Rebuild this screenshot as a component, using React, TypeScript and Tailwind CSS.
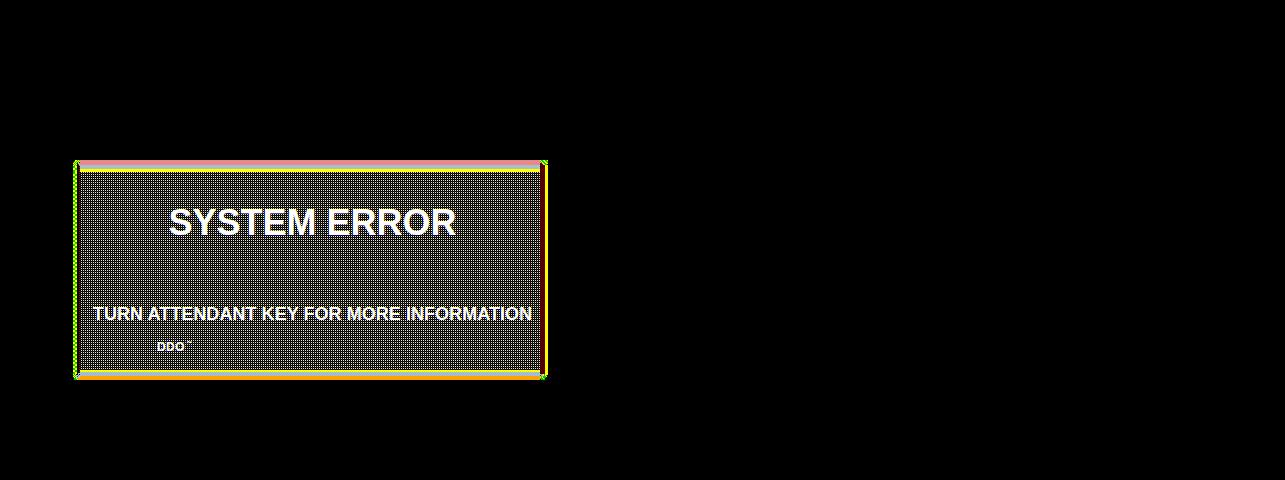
const dither =
  "bg-[conic-gradient(#ffff00_25%,#000_0_50%,#0000e0_0_75%,#000_0)] bg-[size:2px_2px]";

type Cell = [number, number, string];

const G = "#00d000";
const Y = "#ffff00";
const R = "#c00000";
const S = "#a8c8d0";
const D = "#500000";

function Corner({ w, h, cells }: { w: number; h: number; cells: Cell[] }) {
  return (
    <svg
      width={w}
      height={h}
      viewBox={`0 0 ${w} ${h}`}
      shapeRendering="crispEdges"
      className="block"
      aria-hidden
    >
      {cells.map(([x, y, c], i) => (
        <rect key={i} x={x} y={y} width="1" height="1" fill={c} />
      ))}
    </svg>
  );
}

// left rail carried on through the corner rows
function leftRail(from: number, to: number): Cell[] {
  const out: Cell[] = [];
  for (let y = from; y < to; y++) {
    for (let x = 0; x < 4; x++) out.push([x, y, (x >> 1) + (y >> 1) & 1 ? G : Y]);
    if (y % 2) out.push([6, y, R]);
  }
  return out;
}

function rightRail(from: number, to: number): Cell[] {
  const out: Cell[] = [];
  for (let y = from; y < to; y++) {
    for (let x = 0; x < 5; x++) out.push([x, y, D]);
    for (let x = 5; x < 8; x++) out.push([x, y, Y]);
  }
  return out;
}

const topLeft: Cell[] = [
  [2, 0, Y], [3, 0, Y], [4, 0, G], [5, 0, Y], [6, 0, G],
  [1, 1, G], [2, 1, Y], [3, 1, G], [4, 1, Y], [5, 1, G], [6, 1, Y],
  [0, 2, R], [1, 2, Y], [2, 2, G], [3, 2, Y], [4, 2, R], [5, 2, Y],
  [0, 3, Y], [1, 3, G], [2, 3, Y], [3, 3, G], [5, 3, S], [6, 3, S],
  [0, 4, G], [1, 4, Y], [2, 4, G], [3, 4, Y], [5, 4, R], [6, 4, S],
  [0, 5, Y], [1, 5, G], [2, 5, Y], [3, 5, G], [6, 5, "#dd8888"],
  ...leftRail(6, 12),
];

const topRight: Cell[] = [
  [0, 0, Y], [1, 0, G], [2, 0, G], [3, 0, Y], [4, 0, Y], [5, 0, G], [6, 0, G], [7, 0, Y],
  [0, 1, G], [1, 1, Y], [2, 1, G], [3, 1, G], [4, 1, Y], [5, 1, Y], [6, 1, G], [7, 1, G],
  [0, 2, S], [1, 2, G], [2, 2, Y], [3, 2, G], [4, 2, G], [5, 2, Y], [6, 2, Y], [7, 2, G],
  [0, 3, D], [1, 3, D], [2, 3, S], [3, 3, Y], [4, 3, G], [5, 3, G], [6, 3, Y], [7, 3, Y],
  [0, 4, D], [1, 4, D], [2, 4, R], [3, 4, S], [4, 4, Y], [5, 4, G], [6, 4, G],
  ...rightRail(5, 12),
];

const bottomLeft: Cell[] = [
  ...leftRail(0, 4),
  [5, 3, S], [6, 3, S],
  [0, 4, Y], [1, 4, G], [2, 4, Y], [5, 4, S],
  [0, 5, G], [1, 5, Y], [2, 5, G], [3, 5, S], [4, 5, S], [5, 5, "#888888"], [6, 5, S],
  [0, 6, Y], [1, 6, G], [2, 6, Y], [3, 6, S], [4, 6, "#333333"], [5, 6, S], [6, 6, S],
  [0, 7, R], [1, 7, Y], [2, 7, G], [3, 7, Y], [4, 7, S], [5, 7, S], [6, 7, S],
  [1, 8, G], [2, 8, G], [3, 8, Y], [4, 8, G], [5, 8, "#ffa000"], [6, 8, "#ffa000"],
  [1, 9, G], [2, 9, G], [3, 9, G], [4, 9, Y], [5, 9, "#ffa000"], [6, 9, "#ffa000"],
];

const bottomRight: Cell[] = [
  ...rightRail(0, 4),
  [0, 4, S], [1, 4, "#888888"], [2, 4, S], [3, 4, Y], [4, 4, G], [5, 4, Y], [6, 4, Y], [7, 4, Y],
  [0, 5, "#333333"], [1, 5, S], [2, 5, S], [3, 5, Y], [4, 5, G], [5, 5, Y], [6, 5, G],
  [0, 6, S], [1, 6, "#888888"], [2, 6, S], [3, 6, G], [4, 6, G], [5, 6, G], [6, 6, Y],
  [0, 7, Y], [1, 7, G], [2, 7, Y], [3, 7, G], [4, 7, G], [5, 7, G],
  [0, 8, G], [1, 8, G], [2, 8, G], [3, 8, Y], [4, 8, G],
  [1, 9, G], [2, 9, G], [3, 9, G], [4, 9, G],
];

export default function App() {
  return (
    <div className="h-[480px] w-[1285px] overflow-hidden bg-black pl-[73px] pt-[160px] font-['Liberation_Sans',sans-serif] text-white">
      <div className="grid h-[220px] w-[475px] grid-cols-[7px_1fr_8px] grid-rows-[12px_1fr_10px]">
        <Corner w={7} h={12} cells={topLeft} />
        <div className="flex flex-col">
          <div className="h-[5px] bg-[#e88888]" />
          <div className="h-[4px] bg-[#a8c0c8]" />
          <div className="h-[3px] bg-[#ffff00]" />
        </div>
        <Corner w={8} h={12} cells={topRight} />

        <div className="flex">
          <div className="w-[4px] bg-[conic-gradient(#ffff00_25%,#00d000_0_50%,#ffff00_0_75%,#00d000_0)] bg-[size:4px_4px]" />
          <div className="w-[2px] bg-black" />
          <div className="w-[1px] bg-[repeating-linear-gradient(180deg,#000_0_1px,#c00000_1px_2px)]" />
        </div>
        <div className={`flex flex-col items-center pl-[5px] ${dither}`}>
          <h1 className="mt-[31px] text-[36px] font-bold leading-[40px]">SYSTEM ERROR</h1>
          <p className="mt-[60px] whitespace-nowrap text-[18px] font-bold leading-[22px] tracking-[0.05px]">
            TURN ATTENDANT KEY FOR MORE INFORMATION
          </p>
          <p className="mt-[15px] w-full pl-[72px] text-[12px] font-bold leading-[14px] tracking-[0.4px]">
            DDO<span className="ml-[2px]">˜</span>
          </p>
        </div>
        <div className="flex">
          <div className="w-[5px] bg-[#500000]" />
          <div className="w-[3px] bg-[#ffff00]" />
        </div>

        <Corner w={7} h={10} cells={bottomLeft} />
        <div className="flex flex-col">
          <div className="h-[2px] bg-[#ffff00]" />
          <div className="h-[4px] bg-[#a0c0d0]" />
          <div className="h-[4px] bg-[#ffa000]" />
        </div>
        <Corner w={8} h={10} cells={bottomRight} />
      </div>
    </div>
  );
}
